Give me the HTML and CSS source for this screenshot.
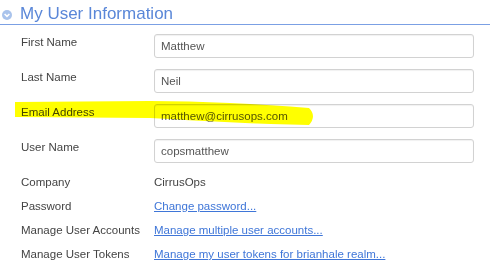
FILE: index.html
```html
<!DOCTYPE html>
<html lang="en">
<head>
    <meta charset="UTF-8">
    <meta name="viewport" content="width=device-width, initial-scale=1.0">
    <title>My User Information</title>
    <link rel="stylesheet" href="styles.css">
</head>
<body>
    <div class="panel">
        <h2 class="panel-title">
            <span class="toggle">
                <svg width="10" height="10" viewBox="0 0 10 10"><path d="M2.6 4 L5 6.4 L7.4 4" fill="none" stroke="#fff" stroke-width="1.6"/></svg>
            </span>
            My User Information
        </h2>

        <div class="user-form">
            <div class="row field-row">
                <label>First Name</label>
                <input type="text" value="Matthew">
            </div>
            <div class="row field-row">
                <label>Last Name</label>
                <input type="text" value="Neil">
            </div>
            <div class="row field-row">
                <label>Email Address</label>
                <input type="text" value="matthew@cirrusops.com">
            </div>
            <div class="row field-row">
                <label>User Name</label>
                <input type="text" value="copsmatthew">
            </div>
            <div class="row text-row">
                <label>Company</label>
                <span>CirrusOps</span>
            </div>
            <div class="row text-row">
                <label>Password</label>
                <a href="#">Change password...</a>
            </div>
            <div class="row text-row">
                <label>Manage User Accounts</label>
                <a href="#">Manage multiple user accounts...</a>
            </div>
            <div class="row text-row">
                <label>Manage User Tokens</label>
                <a href="#">Manage my user tokens for brianhale realm...</a>
            </div>
        </div>

        <!-- highlighter mark drawn over the email row -->
        <svg class="highlight" width="490" height="279" viewBox="0 0 490 279">
            <path d="M15 102 L150 101 C200 101 260 104 309 108 Q317 116 309 125 C260 124 200 121 150 118 L15 117 Z" fill="#ffff00"/>
        </svg>
    </div>
</body>
</html>
```

FILE: styles.css
```css
:root {
    --title-color: #5a87d8;
    --rule-color: #7ba0e4;
    --text-color: #444;
    --link-color: #3f76d8;
}

* {
    margin: 0;
    padding: 0;
    box-sizing: border-box;
}

body {
    font-family: 'Liberation Sans', Arial, sans-serif;
    font-size: 11.5px;
    color: var(--text-color);
    background: #fff;
}

.panel {
    position: relative;
    width: 490px;
    height: 279px;
    overflow: hidden;
}

.panel-title {
    display: flex;
    align-items: center;
    height: 25px;
    padding-top: 3px;
    border-bottom: 1px solid var(--rule-color);
    font-size: 17px;
    font-weight: normal;
    line-height: 20px;
    color: var(--title-color);
}

.toggle {
    display: flex;
    align-items: center;
    justify-content: center;
    width: 10px;
    height: 10px;
    margin: 2px 8px 0 2px;
    border-radius: 50%;
    background: #a9c3ec;
}

.user-form {
    padding: 9px 0 0 21px;
}

.row {
    display: flex;
    align-items: flex-start;
}

.row label {
    width: 133px;
    line-height: 16px;
}

.field-row {
    margin-bottom: 11px;
}

.field-row input {
    width: 320px;
    height: 24px;
    padding: 0 6px;
    border: 1px solid #d2d2d2;
    border-radius: 3px;
    box-shadow: inset 0 1px 1px rgba(0, 0, 0, 0.06);
    font-family: inherit;
    font-size: 11.5px;
    color: #555;
    background: #fff;
}

.text-row {
    height: 16px;
    margin-bottom: 8px;
    line-height: 16px;
}

.text-row a {
    color: var(--link-color);
    text-decoration: underline;
}

.highlight {
    position: absolute;
    top: 0;
    left: 0;
    pointer-events: none;
    mix-blend-mode: multiply;
}
```
